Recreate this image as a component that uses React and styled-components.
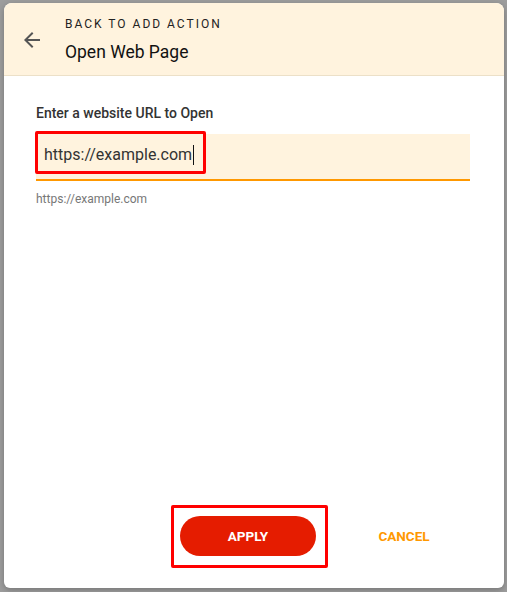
import styled, { createGlobalStyle } from 'styled-components';

const GlobalStyle = createGlobalStyle`
  html, body {
    margin: 0;
    padding: 0;
    background: #9d9d9d;
    font-family: Roboto, "Liberation Sans", Arial, sans-serif;
  }
  * { box-sizing: border-box; }
`;

const Backdrop = styled.div`
  width: 507px;
  height: 592px;
  padding: 3px 3px 4px 4px;
  background: #9d9d9d;
`;

const Dialog = styled.div`
  width: 500px;
  height: 585px;
  background: #fff;
  border-radius: 8px 8px 6px 6px;
  overflow: hidden;
  display: flex;
  flex-direction: column;
  box-shadow: 0 2px 6px rgba(0, 0, 0, 0.25);
`;

const Header = styled.div`
  height: 73px;
  background: #fff3de;
  border-bottom: 1px solid #ece0c8;
  display: flex;
  align-items: center;
  padding-left: 14px;
  gap: 19px;
`;

const BackButton = styled.button`
  width: 28px;
  height: 28px;
  padding: 0;
  border: none;
  background: none;
  color: #555;
  display: flex;
  align-items: center;
  justify-content: center;
  cursor: pointer;
  margin-top: 2px;
`;

const HeaderText = styled.div`
  display: flex;
  flex-direction: column;
  margin-top: 0;
`;

const Caption = styled.div`
  font-size: 12px;
  letter-spacing: 2px;
  color: #222;
  line-height: 16px;
`;

const Title = styled.div`
  font-size: 17.5px;
  color: #111;
  line-height: 22px;
  margin-top: 9px;
`;

const Body = styled.div`
  flex: 1;
  padding: 29px 34px 0 32px;
`;

const Label = styled.div`
  font-size: 14px;
  font-weight: 500;
  color: #333;
  line-height: 16px;
`;

const Field = styled.div`
  position: relative;
  margin-top: 13px;
  height: 47px;
  background: #fff3de;
  border-bottom: 2px solid #ff9800;
  display: flex;
  align-items: center;
  padding: 0 8px;
`;

const FieldText = styled.span`
  font-size: 16px;
  color: #333;
  margin-top: -4px;
  display: flex;
  align-items: center;
`;

const Caret = styled.span`
  display: inline-block;
  width: 1px;
  height: 20px;
  background: #111;
  margin-left: 1px;
`;

const Highlight = styled.div`
  position: absolute;
  border: 3px solid #f00;
  border-radius: 2px;
  pointer-events: none;
`;

const Helper = styled.div`
  margin-top: 11px;
  font-size: 12px;
  color: #777;
  line-height: 14px;
`;

const Footer = styled.div`
  display: flex;
  justify-content: flex-end;
  align-items: center;
  padding: 0 50px 32px 0;
  gap: 38px;
`;

const ApplyWrap = styled.div`
  position: relative;
`;

const ApplyButton = styled.button`
  width: 136px;
  height: 40px;
  border: none;
  border-radius: 20px;
  background: #e51c00;
  color: #fff;
  font-family: inherit;
  font-size: 13.5px;
  font-weight: 700;
  cursor: pointer;
`;

const CancelButton = styled.button`
  width: 100px;
  height: 40px;
  border: none;
  background: none;
  color: #ff9800;
  font-family: inherit;
  font-size: 13.5px;
  font-weight: 700;
  cursor: pointer;
`;

function ArrowBack() {
  return (
    <svg width="24" height="24" viewBox="0 0 24 24" fill="currentColor">
      <path d="M20 11H7.83l5.59-5.59L12 4l-8 8 8 8 1.41-1.41L7.83 13H20v-2z" />
    </svg>
  );
}

export default function App() {
  return (
    <>
      <GlobalStyle />
      <Backdrop>
        <Dialog>
          <Header>
            <BackButton aria-label="Back">
              <ArrowBack />
            </BackButton>
            <HeaderText>
              <Caption>BACK TO ADD ACTION</Caption>
              <Title>Open Web Page</Title>
            </HeaderText>
          </Header>
          <Body>
            <Label>Enter a website URL to Open</Label>
            <Field>
              <FieldText>
                https://example.com
                <Caret />
              </FieldText>
              <Highlight style={{ left: -1, top: -3, width: 171, height: 43 }} />
            </Field>
            <Helper>https://example.com</Helper>
          </Body>
          <Footer>
            <ApplyWrap>
              <ApplyButton>APPLY</ApplyButton>
              <Highlight style={{ left: -9, top: -11, width: 157, height: 63 }} />
            </ApplyWrap>
            <CancelButton>CANCEL</CancelButton>
          </Footer>
        </Dialog>
      </Backdrop>
    </>
  );
}
